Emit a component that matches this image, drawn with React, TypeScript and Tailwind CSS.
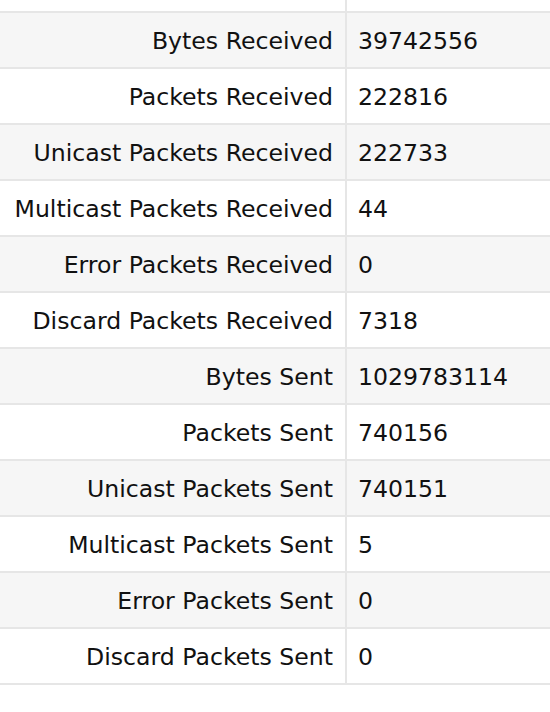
const rows: [string, string][] = [
  ["Bytes Received", "39742556"],
  ["Packets Received", "222816"],
  ["Unicast Packets Received", "222733"],
  ["Multicast Packets Received", "44"],
  ["Error Packets Received", "0"],
  ["Discard Packets Received", "7318"],
  ["Bytes Sent", "1029783114"],
  ["Packets Sent", "740156"],
  ["Unicast Packets Sent", "740151"],
  ["Multicast Packets Sent", "5"],
  ["Error Packets Sent", "0"],
  ["Discard Packets Sent", "0"],
];

export default function App() {
  return (
    <div
      className="w-[550px] h-[712px] bg-white text-[#111] text-[23.6px]"
      style={{ fontFamily: '"DejaVu Sans", Verdana, sans-serif' }}
    >
      {/* tail of the previous row */}
      <div className="flex h-[13px] border-b-2 border-[#e6e6e6]">
        <div className="w-[347px] border-r-2 border-[#e6e6e6]" />
        <div className="flex-1" />
      </div>
      {rows.map(([label, value], i) => (
        <div
          key={label}
          className={`flex h-[56px] border-b-2 border-[#e6e6e6] ${
            i % 2 === 0 ? "bg-[#f6f6f6]" : "bg-white"
          }`}
        >
          <div className="w-[347px] border-r-2 border-[#e6e6e6] flex items-center justify-end pr-[12px] pt-[4px] whitespace-nowrap">
            {label}
          </div>
          <div className="flex-1 flex items-center pl-[11px] pt-[4px]">{value}</div>
        </div>
      ))}
    </div>
  );
}
